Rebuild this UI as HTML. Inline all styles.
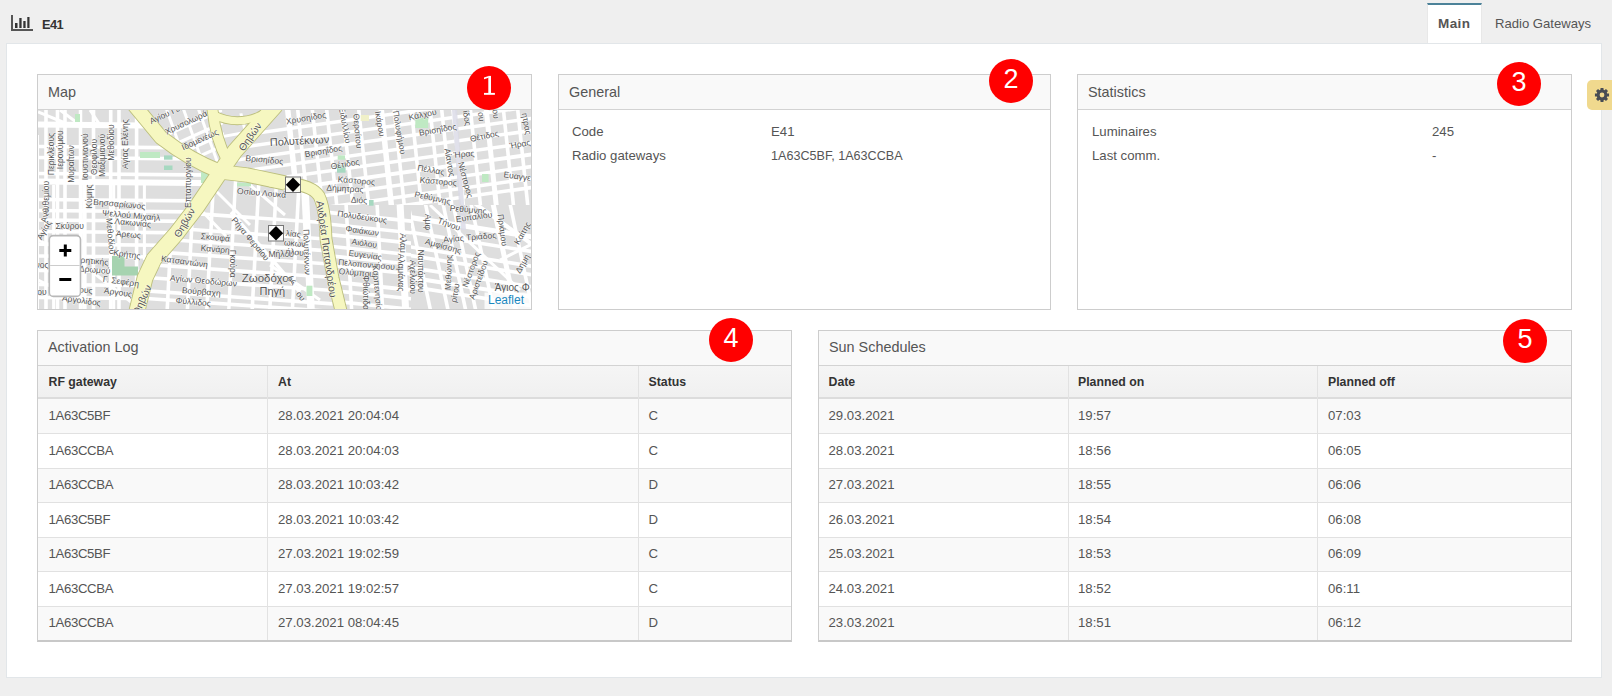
<!DOCTYPE html>
<html><head><meta charset="utf-8">
<style>
*{box-sizing:border-box;margin:0;padding:0}
html,body{width:1612px;height:696px;overflow:hidden}
body{background:#efefef;font-family:"Liberation Sans",sans-serif;color:#555;position:relative}
.abs{position:absolute}
.icon{left:11px;top:15px;width:22px;height:16px}
.e41{left:42px;top:17px;letter-spacing:-0.6px;font-size:12.8px;font-weight:bold;color:#333;line-height:16px}
.tab{left:1427px;top:3px;width:55px;height:41px;background:#fff;border-top:2px solid #4c8299;border-left:1px solid #e8e8e8;border-right:1px solid #e8e8e8}
.tabt{top:15.5px;font-size:13.5px;line-height:16px;color:#555;white-space:nowrap}
.panel{left:6px;top:43px;width:1596px;height:635px;background:#fff;border:1px solid #e2e6e9}
.box{background:#fff;border:1px solid #cdcdcd}
.bh{position:absolute;left:0;top:0;right:0;height:35px;background:#f9f9f9;border-bottom:1px solid #d3d3d3}
.bh span{position:absolute;left:10px;top:9px;font-size:14.4px;line-height:16px;color:#555;white-space:nowrap}
.ttl{font-size:14.4px;line-height:16px;color:#555;white-space:nowrap}
.kv{position:absolute;font-size:13.2px;line-height:16px;color:#555;white-space:nowrap}
.th{font-size:12.3px;font-weight:bold;color:#333;line-height:16px;white-space:nowrap}
.td{font-size:13.2px;color:#555;line-height:16px;white-space:nowrap}
.badge{width:44px;height:44px;border-radius:50%;background:#ff0000;color:#fff;font-size:27px;line-height:41px;text-align:center}
.gear{left:1587px;top:80px;width:30px;height:30px;background:#f0d98e;border-radius:5px}
</style></head>
<body>
<svg class="abs icon" viewBox="0 0 22 16"><rect x="0" y="0" width="2" height="16" fill="#555"/><rect x="0" y="14" width="22" height="2" fill="#555"/><rect x="4" y="8" width="2.5" height="5" fill="#333"/><rect x="8.3" y="3" width="2.3" height="10" fill="#333"/><rect x="12.3" y="6" width="2.3" height="7" fill="#333"/><rect x="16.3" y="2" width="2.2" height="11" fill="#333"/></svg>
<div class="abs e41">E41</div>
<div class="abs tab"></div>
<div class="abs tabt" style="left:1438px;font-weight:bold;letter-spacing:0.4px">Main</div>
<div class="abs tabt" style="left:1495px;font-size:13.1px">Radio Gateways</div>

<div class="abs panel"></div>

<div class="abs box" style="left:37px;top:74px;width:495px;height:236px">
  <div class="bh"><span>Map</span></div>
</div>
<svg class="abs" style="left:38px;top:110px" width="493" height="199" viewBox="38 110 493 199"><defs><clipPath id="rL"><polygon points="0,0 138,0 161,137 190,152 221,171 196,208 176,234 154,259 145,278 137,400 0,400"/></clipPath><clipPath id="rT"><polygon points="138,0 213,0 226,158 221,171 190,152 161,137"/></clipPath><clipPath id="rTri"><polygon points="216,116 272,110 235,151 226,158"/></clipPath><clipPath id="rR1"><polygon points="272,0 600,0 600,205 323,205 320,196 309,185 285,181 247,173 221,171 226,158 235,151"/></clipPath><clipPath id="rR2"><polygon points="323,205 411,205 411,400 342,400 333,278 326,239"/></clipPath><clipPath id="rR3"><polygon points="411,205 600,205 600,400 411,400"/></clipPath><clipPath id="rB"><polygon points="221,171 247,173 285,181 309,185 320,196 323,208 326,239 331,278 338,400 137,400 145,278 154,259 176,234 196,208"/></clipPath></defs><rect x="38" y="110" width="493" height="199" fill="#dedede"/><g clip-path="url(#rL)"><line x1="-310.0" y1="121.5" x2="490.0" y2="128.5" stroke="#fff" stroke-width="6"/><line x1="-310.0" y1="143.5" x2="490.0" y2="150.5" stroke="#fff" stroke-width="3.6"/><line x1="-310.0" y1="154.5" x2="490.0" y2="161.5" stroke="#fff" stroke-width="3.6"/><line x1="-310.0" y1="170.5" x2="490.0" y2="177.5" stroke="#fff" stroke-width="3.6"/><line x1="-310.0" y1="178.5" x2="490.0" y2="185.5" stroke="#fff" stroke-width="6"/><line x1="-310.0" y1="196.5" x2="490.0" y2="203.5" stroke="#fff" stroke-width="3.6"/><line x1="-310.0" y1="207.5" x2="490.0" y2="214.5" stroke="#fff" stroke-width="3.6"/><line x1="-310.0" y1="217.0" x2="490.0" y2="224.0" stroke="#fff" stroke-width="3.6"/><line x1="-310.0" y1="228.5" x2="490.0" y2="235.5" stroke="#fff" stroke-width="3.6"/><line x1="-310.0" y1="241.1" x2="490.0" y2="248.1" stroke="#fff" stroke-width="3.6"/><line x1="-310.0" y1="252.9" x2="490.0" y2="259.9" stroke="#fff" stroke-width="3.6"/><line x1="-310.0" y1="267.5" x2="490.0" y2="274.5" stroke="#fff" stroke-width="3.6"/><line x1="-310.0" y1="281.5" x2="490.0" y2="288.5" stroke="#fff" stroke-width="3.6"/><line x1="-310.0" y1="294.5" x2="490.0" y2="301.5" stroke="#fff" stroke-width="3.6"/><line x1="46.0" y1="-100.0" x2="46.0" y2="500.0" stroke="#fff" stroke-width="3.6"/><line x1="57.5" y1="-100.0" x2="57.5" y2="500.0" stroke="#fff" stroke-width="3.6"/><line x1="65.0" y1="-100.0" x2="65.0" y2="500.0" stroke="#fff" stroke-width="3.6"/><line x1="80.5" y1="-100.0" x2="80.5" y2="500.0" stroke="#fff" stroke-width="3.5"/><line x1="93.5" y1="-100.0" x2="93.5" y2="500.0" stroke="#fff" stroke-width="3.6"/><line x1="110.7" y1="-100.0" x2="110.7" y2="500.0" stroke="#fff" stroke-width="3.6"/><line x1="119.0" y1="-100.0" x2="119.0" y2="500.0" stroke="#fff" stroke-width="3.6"/><line x1="136.6" y1="-100.0" x2="136.6" y2="500.0" stroke="#fff" stroke-width="3.6"/></g><g clip-path="url(#rL)"><line x1="38.0" y1="112.0" x2="70.0" y2="125.0" stroke="#fff" stroke-width="3"/><line x1="60.0" y1="110.0" x2="80.0" y2="125.0" stroke="#fff" stroke-width="3"/><line x1="90.0" y1="110.0" x2="100.0" y2="125.0" stroke="#fff" stroke-width="3"/><line x1="38.0" y1="135.0" x2="38.0" y2="309.0" stroke="#fff" stroke-width="2"/><line x1="53.6" y1="185.0" x2="53.6" y2="309.0" stroke="#fff" stroke-width="3"/><line x1="84.4" y1="182.0" x2="84.4" y2="309.0" stroke="#fff" stroke-width="4.5"/><line x1="113.7" y1="182.0" x2="113.7" y2="309.0" stroke="#fff" stroke-width="3"/><line x1="144.4" y1="182.0" x2="144.4" y2="260.0" stroke="#fff" stroke-width="3"/><line x1="38.0" y1="280.0" x2="80.0" y2="300.0" stroke="#fff" stroke-width="3"/><line x1="90.0" y1="270.0" x2="140.0" y2="309.0" stroke="#fff" stroke-width="3"/><line x1="38.0" y1="240.0" x2="60.0" y2="250.0" stroke="#fff" stroke-width="2.5"/></g><g clip-path="url(#rT)"><line x1="140.0" y1="147.0" x2="240.0" y2="102.0" stroke="#fff" stroke-width="3.2"/><line x1="140.0" y1="160.0" x2="240.0" y2="115.0" stroke="#fff" stroke-width="3.2"/><line x1="140.0" y1="171.7" x2="240.0" y2="126.7" stroke="#fff" stroke-width="3.2"/><line x1="140.0" y1="183.0" x2="240.0" y2="138.0" stroke="#fff" stroke-width="3.2"/><line x1="165.0" y1="105.0" x2="190.0" y2="175.0" stroke="#fff" stroke-width="3"/><line x1="182.0" y1="105.0" x2="207.0" y2="175.0" stroke="#fff" stroke-width="3"/><line x1="197.0" y1="105.0" x2="222.0" y2="175.0" stroke="#fff" stroke-width="3"/></g><g clip-path="url(#rTri)"><line x1="215.0" y1="138.0" x2="275.0" y2="127.0" stroke="#fff" stroke-width="3"/><line x1="240.0" y1="110.0" x2="250.0" y2="150.0" stroke="#fff" stroke-width="3"/></g><g clip-path="url(#rR1)"><line x1="0.0" y1="169.2" x2="800.0" y2="56.8" stroke="#fff" stroke-width="3.5"/><line x1="0.0" y1="181.2" x2="800.0" y2="68.8" stroke="#fff" stroke-width="3.6"/><line x1="0.0" y1="193.2" x2="800.0" y2="80.8" stroke="#fff" stroke-width="3.5"/><line x1="0.0" y1="205.2" x2="800.0" y2="92.8" stroke="#fff" stroke-width="3.6"/><line x1="0.0" y1="217.2" x2="800.0" y2="104.8" stroke="#fff" stroke-width="3.6"/><line x1="0.0" y1="229.2" x2="800.0" y2="116.8" stroke="#fff" stroke-width="4"/><line x1="0.0" y1="241.2" x2="800.0" y2="128.8" stroke="#fff" stroke-width="3.6"/><line x1="0.0" y1="253.2" x2="800.0" y2="140.8" stroke="#fff" stroke-width="3.6"/><line x1="0.0" y1="262.2" x2="800.0" y2="149.8" stroke="#fff" stroke-width="3.6"/><line x1="261.5" y1="-140.0" x2="324.5" y2="460.0" stroke="#fff" stroke-width="5.5"/><line x1="271.5" y1="-140.0" x2="334.5" y2="460.0" stroke="#fff" stroke-width="3.6"/><line x1="286.1" y1="-140.0" x2="349.1" y2="460.0" stroke="#fff" stroke-width="3.6"/><line x1="300.5" y1="-140.0" x2="363.5" y2="460.0" stroke="#fff" stroke-width="3.6"/><line x1="316.5" y1="-140.0" x2="379.5" y2="460.0" stroke="#fff" stroke-width="3.6"/><line x1="332.5" y1="-140.0" x2="395.5" y2="460.0" stroke="#fff" stroke-width="3.6"/><line x1="355.1" y1="-140.0" x2="418.1" y2="460.0" stroke="#fff" stroke-width="5.5"/><line x1="368.0" y1="-140.0" x2="431.0" y2="460.0" stroke="#fff" stroke-width="3.6"/><line x1="385.2" y1="-140.0" x2="448.2" y2="460.0" stroke="#fff" stroke-width="3.6"/><line x1="403.9" y1="-140.0" x2="466.9" y2="460.0" stroke="#fff" stroke-width="3.6"/><line x1="415.5" y1="-140.0" x2="478.5" y2="460.0" stroke="#fff" stroke-width="3.6"/><line x1="426.9" y1="-140.0" x2="489.9" y2="460.0" stroke="#fff" stroke-width="4"/><line x1="444.2" y1="-140.0" x2="507.2" y2="460.0" stroke="#fff" stroke-width="3.6"/><line x1="460.0" y1="-140.0" x2="523.0" y2="460.0" stroke="#fff" stroke-width="5"/><line x1="477.2" y1="-140.0" x2="540.2" y2="460.0" stroke="#fff" stroke-width="3.6"/><line x1="491.5" y1="-140.0" x2="554.5" y2="460.0" stroke="#fff" stroke-width="3.6"/></g><g clip-path="url(#rR2)"><line x1="-30.0" y1="174.8" x2="770.0" y2="258.8" stroke="#fff" stroke-width="3.6"/><line x1="-30.0" y1="186.5" x2="770.0" y2="270.5" stroke="#fff" stroke-width="3.6"/><line x1="-30.0" y1="196.8" x2="770.0" y2="280.8" stroke="#fff" stroke-width="3.6"/><line x1="-30.0" y1="208.5" x2="770.0" y2="292.5" stroke="#fff" stroke-width="3.6"/><line x1="-30.0" y1="218.0" x2="770.0" y2="302.0" stroke="#fff" stroke-width="3.6"/><line x1="-30.0" y1="227.6" x2="770.0" y2="311.6" stroke="#fff" stroke-width="3.6"/><line x1="-30.0" y1="243.7" x2="770.0" y2="327.7" stroke="#fff" stroke-width="4"/><line x1="-30.0" y1="252.5" x2="770.0" y2="336.5" stroke="#fff" stroke-width="3.6"/><line x1="-30.0" y1="263.0" x2="770.0" y2="347.0" stroke="#fff" stroke-width="3.6"/><line x1="292.3" y1="-40.0" x2="323.7" y2="560.0" stroke="#fff" stroke-width="8"/><line x1="333.3" y1="-40.0" x2="364.7" y2="560.0" stroke="#fff" stroke-width="3.6"/><line x1="364.3" y1="-40.0" x2="395.7" y2="560.0" stroke="#fff" stroke-width="3.6"/><line x1="387.3" y1="-40.0" x2="418.7" y2="560.0" stroke="#fff" stroke-width="7"/></g><g clip-path="url(#rR3)"><line x1="70.0" y1="163.6" x2="870.0" y2="290.4" stroke="#fff" stroke-width="5"/><line x1="70.0" y1="178.3" x2="870.0" y2="305.1" stroke="#fff" stroke-width="3.6"/><line x1="70.0" y1="193.0" x2="870.0" y2="319.8" stroke="#fff" stroke-width="3.6"/><line x1="70.0" y1="201.6" x2="870.0" y2="328.4" stroke="#fff" stroke-width="3.6"/><line x1="70.0" y1="213.6" x2="870.0" y2="340.4" stroke="#fff" stroke-width="3.6"/><line x1="70.0" y1="223.6" x2="870.0" y2="350.4" stroke="#fff" stroke-width="4"/><line x1="70.0" y1="232.6" x2="870.0" y2="359.4" stroke="#fff" stroke-width="3.6"/><line x1="356.0" y1="-40.0" x2="483.6" y2="560.0" stroke="#fff" stroke-width="3.6"/><line x1="373.6" y1="-40.0" x2="501.2" y2="560.0" stroke="#fff" stroke-width="3.6"/><line x1="391.2" y1="-40.0" x2="518.8" y2="560.0" stroke="#fff" stroke-width="3.6"/><line x1="401.2" y1="-40.0" x2="528.8" y2="560.0" stroke="#fff" stroke-width="3.6"/><line x1="419.2" y1="-40.0" x2="546.8" y2="560.0" stroke="#fff" stroke-width="3.6"/><line x1="441.2" y1="-40.0" x2="568.8" y2="560.0" stroke="#fff" stroke-width="5"/><line x1="458.2" y1="-40.0" x2="585.8" y2="560.0" stroke="#fff" stroke-width="3.6"/></g><g clip-path="url(#rR3)"><line x1="470.0" y1="200.0" x2="540.0" y2="250.0" stroke="#fff" stroke-width="4"/><line x1="430.0" y1="205.0" x2="520.0" y2="290.0" stroke="#fff" stroke-width="3"/><line x1="500.0" y1="260.0" x2="540.0" y2="240.0" stroke="#fff" stroke-width="3"/></g><g clip-path="url(#rB)"><line x1="-160.0" y1="188.8" x2="640.0" y2="244.8" stroke="#fff" stroke-width="3.6"/><line x1="-160.0" y1="205.0" x2="640.0" y2="261.0" stroke="#fff" stroke-width="3.5"/><line x1="-160.0" y1="216.6" x2="640.0" y2="272.6" stroke="#fff" stroke-width="3.6"/><line x1="-160.0" y1="229.8" x2="640.0" y2="285.8" stroke="#fff" stroke-width="3.6"/><line x1="-160.0" y1="243.0" x2="640.0" y2="299.0" stroke="#fff" stroke-width="3.6"/><line x1="-160.0" y1="256.0" x2="640.0" y2="312.0" stroke="#fff" stroke-width="3.6"/><line x1="-160.0" y1="269.4" x2="640.0" y2="325.4" stroke="#fff" stroke-width="3.6"/><line x1="-160.0" y1="277.0" x2="640.0" y2="333.0" stroke="#fff" stroke-width="3.6"/><line x1="185.5" y1="-40.0" x2="154.1" y2="560.0" stroke="#fff" stroke-width="3.6"/><line x1="205.7" y1="-40.0" x2="174.3" y2="560.0" stroke="#fff" stroke-width="3.6"/><line x1="225.1" y1="-40.0" x2="193.7" y2="560.0" stroke="#fff" stroke-width="3.6"/><line x1="247.1" y1="-40.0" x2="215.7" y2="560.0" stroke="#fff" stroke-width="3.5"/><line x1="270.5" y1="-40.0" x2="239.1" y2="560.0" stroke="#fff" stroke-width="3.6"/><line x1="288.1" y1="-40.0" x2="256.7" y2="560.0" stroke="#fff" stroke-width="3.6"/><line x1="310.7" y1="-40.0" x2="279.3" y2="560.0" stroke="#fff" stroke-width="3.6"/></g><g clip-path="url(#rB)"><line x1="305.0" y1="190.0" x2="311.0" y2="309.0" stroke="#fff" stroke-width="7.5"/><line x1="231.0" y1="212.0" x2="300.0" y2="292.0" stroke="#fff" stroke-width="3.5"/><line x1="197.0" y1="206.0" x2="226.0" y2="236.0" stroke="#fff" stroke-width="3"/><line x1="215.0" y1="190.0" x2="250.0" y2="225.0" stroke="#fff" stroke-width="3"/><line x1="250.0" y1="185.0" x2="285.0" y2="215.0" stroke="#fff" stroke-width="3"/><line x1="270.0" y1="265.0" x2="320.0" y2="300.0" stroke="#fff" stroke-width="3"/></g><rect x="140" y="152" width="20" height="6" fill="#bfe9c3"/><rect x="112" y="256" width="12.5" height="11" fill="#a6d3b0"/><rect x="112" y="266.5" width="26" height="9" fill="#a6d3b0"/><rect x="75" y="114" width="5" height="8" fill="#bfe9c3"/><rect x="164" y="155.4" width="8.5" height="4.3" fill="#a6d8c0"/><rect x="164" y="165.5" width="8.5" height="4.5" fill="#a6d8c0"/><rect x="201" y="172" width="10" height="11" fill="#bfe9c3"/><rect x="237" y="182.7" width="14" height="3.6" fill="#bfe9c3"/><rect x="337.7" y="155.4" width="7.3" height="4.3" fill="#bfe9c3"/><rect x="337" y="165.5" width="8.6" height="7.2" fill="#a6d8c0"/><rect x="360.7" y="115" width="8.3" height="6" fill="#f0f0c8"/><rect x="369" y="200" width="4.6" height="5.7" fill="#a6d8c0"/><rect x="415.3" y="118" width="12.9" height="10" fill="#bfe9c3"/><rect x="482" y="174" width="6.6" height="8" fill="#bfe9c3"/><rect x="306.5" y="285.7" width="5.9" height="10.3" fill="#bfe9c3"/><polygon points="452,110 457,110 466,230 461,230" fill="#d9d9e6" opacity="0.8"/><path d="M 130 100 L 161 137.5 Q 190 160 221 172 L 247 175 L 285 183" fill="none" stroke="#bcbf7c" stroke-width="15.3" stroke-linejoin="round"/><path d="M 270 181 L 285 183 Q 312 185 319 196 Q 325 208 326 239 L 333 278 L 342 315" fill="none" stroke="#bcbf7c" stroke-width="12.8" stroke-linejoin="round"/><path d="M 276 105 L 235 151 L 221 171 L 196 208 L 176 234 L 154 259 L 145 278 L 136 315" fill="none" stroke="#bcbf7c" stroke-width="16.8" stroke-linejoin="round"/><path d="M 212 105 Q 215 138 227 160" fill="none" stroke="#bcbf7c" stroke-width="11.8" stroke-linejoin="round"/><path d="M 214 115 Q 236 126 259 116 L 282 104" fill="none" stroke="#bcbf7c" stroke-width="8.8" stroke-linejoin="round"/><path d="M 130 100 L 161 137.5 Q 190 160 221 172 L 247 175 L 285 183" fill="none" stroke="#f6f7c0" stroke-width="13.5" stroke-linejoin="round"/><path d="M 270 181 L 285 183 Q 312 185 319 196 Q 325 208 326 239 L 333 278 L 342 315" fill="none" stroke="#f6f7c0" stroke-width="11" stroke-linejoin="round"/><path d="M 276 105 L 235 151 L 221 171 L 196 208 L 176 234 L 154 259 L 145 278 L 136 315" fill="none" stroke="#f6f7c0" stroke-width="15" stroke-linejoin="round"/><path d="M 212 105 Q 215 138 227 160" fill="none" stroke="#f6f7c0" stroke-width="10" stroke-linejoin="round"/><path d="M 214 115 Q 236 126 259 116 L 282 104" fill="none" stroke="#f6f7c0" stroke-width="7" stroke-linejoin="round"/><g font-family="Liberation Sans" fill="#555" text-anchor="middle" dominant-baseline="central" stroke="#fff" stroke-width="1.2" stroke-opacity="0.55" paint-order="stroke"><text x="51.1" y="154" font-size="8.5" transform="rotate(-90 51.1 154)">Περικλέους</text><text x="60.4" y="149.7" font-size="8.5" transform="rotate(-90 60.4 149.7)">Ιερονύμου</text><text x="71.2" y="164" font-size="8.5" transform="rotate(-90 71.2 164)">Μυραΐτων</text><text x="84.9" y="156.9" font-size="8.5" transform="rotate(-90 84.9 156.9)">Ιουστινιανού</text><text x="94.2" y="156.9" font-size="8.5" transform="rotate(-90 94.2 156.9)">Θεοφίλου</text><text x="102" y="155.4" font-size="8.5" transform="rotate(-90 102 155.4)">Μαξιμιανού</text><text x="110.7" y="142.5" font-size="8.5" transform="rotate(-90 110.7 142.5)">Μεθοδίου</text><text x="125" y="144" font-size="8.5" transform="rotate(-90 125 144)">Αγίας Ελένης</text><text x="89" y="196.4" font-size="8.5" transform="rotate(-90 89 196.4)">Κύμης</text><text x="119.3" y="204" font-size="8.5" transform="rotate(5 119.3 204)">Βησσαρίωνος</text><text x="46" y="198" font-size="8.5" transform="rotate(-90 46 198)">Ανθεμίου</text><text x="169.6" y="112.3" font-size="8.5" transform="rotate(-25 169.6 112.3)">Αγίου Γεωρ</text><text x="186" y="122.4" font-size="8.5" transform="rotate(-25 186 122.4)">Χρυσολωρά</text><text x="199.8" y="139.6" font-size="8.5" transform="rotate(-25 199.8 139.6)">Ιδομενέως</text><text x="250" y="136.7" font-size="10" transform="rotate(-55 250 136.7)">Θηβών</text><text x="188.3" y="182.7" font-size="8.5" transform="rotate(-90 188.3 182.7)">Επταπυργίου</text><text x="306" y="118" font-size="8.5" transform="rotate(-10 306 118)">Χρυσηίδος</text><text x="299.5" y="140.5" font-size="11" transform="rotate(-3 299.5 140.5)">Πολυτέκνων</text><text x="264.4" y="159.7" font-size="8.5" transform="rotate(5 264.4 159.7)">Βρισηίδος</text><text x="261.6" y="192.8" font-size="8.5" transform="rotate(5 261.6 192.8)">Οσίου Λουκά</text><text x="323.4" y="151" font-size="8.5" transform="rotate(-10 323.4 151)">Βρισηΐδος</text><text x="345" y="164" font-size="8.5" transform="rotate(-10 345 164)">Θέτιδος</text><text x="356.4" y="180.6" font-size="8.5" transform="rotate(5 356.4 180.6)">Κάστορος</text><text x="345" y="188.5" font-size="8.5" transform="rotate(3 345 188.5)">Δήμητρας</text><text x="359" y="200" font-size="8.5" transform="rotate(3 359 200)">Διός</text><text x="345" y="125" font-size="8.5" transform="rotate(80 345 125)">Ειδυλλίου</text><text x="357.8" y="131" font-size="8.5" transform="rotate(85 357.8 131)">Θερσίτου</text><text x="380" y="123.8" font-size="8.5" transform="rotate(80 380 123.8)">Ικάρου</text><text x="399.5" y="132.4" font-size="8.5" transform="rotate(80 399.5 132.4)">Πολυφήμου</text><text x="422.5" y="114.5" font-size="8.5" transform="rotate(-12 422.5 114.5)">Κάλχου</text><text x="437.6" y="129.6" font-size="8.5" transform="rotate(-10 437.6 129.6)">Βρισηΐδος</text><text x="484.3" y="136" font-size="8.5" transform="rotate(-12 484.3 136)">Θέτιδος</text><text x="520" y="144" font-size="8.5" transform="rotate(-10 520 144)">Ήρας</text><text x="464" y="154" font-size="8.5" transform="rotate(-5 464 154)">Ήρας</text><text x="449.8" y="162.6" font-size="8.5" transform="rotate(80 449.8 162.6)">Αίαντος</text><text x="465.6" y="179.8" font-size="8.5" transform="rotate(75 465.6 179.8)">Νέστορος</text><text x="431" y="169.8" font-size="8.5" transform="rotate(10 431 169.8)">Πέλλας</text><text x="438.3" y="181.3" font-size="8.5" transform="rotate(5 438.3 181.3)">Κάστορος</text><text x="432.6" y="197.8" font-size="8.5" transform="rotate(12 432.6 197.8)">Ρεθύμνης</text><text x="517.3" y="176.2" font-size="8.5" transform="rotate(8 517.3 176.2)">Ευαγγε</text><text x="467" y="118" font-size="8.5" transform="rotate(80 467 118)">ίδος</text><text x="481.4" y="116.6" font-size="8.5" transform="rotate(85 481.4 116.6)">ου</text><text x="496" y="114" font-size="8.5" transform="rotate(85 496 114)">ου</text><text x="526.7" y="123.8" font-size="8.5" transform="rotate(80 526.7 123.8)">ητρας</text><text x="44.8" y="215.3" font-size="8.5" transform="rotate(-80 44.8 215.3)">Ανθ</text><text x="131.3" y="215.3" font-size="8.5" transform="rotate(5 131.3 215.3)">Ψελλού Μιχαήλ</text><text x="110.8" y="236" font-size="8.5" transform="rotate(85 110.8 236)">Μεθοδίου</text><text x="132.8" y="222.7" font-size="8.5" transform="rotate(5 132.8 222.7)">Λακωνίας</text><text x="69.7" y="226.3" font-size="8.5" transform="rotate(0 69.7 226.3)">Σκύρου</text><text x="128.4" y="234.4" font-size="8.5" transform="rotate(5 128.4 234.4)">Άρεως</text><text x="126.9" y="254.2" font-size="8.5" transform="rotate(8 126.9 254.2)">Κρήτης</text><text x="91.7" y="260.8" font-size="8.5" transform="rotate(5 91.7 260.8)">Κρητικής</text><text x="94.7" y="269.6" font-size="8.5" transform="rotate(5 94.7 269.6)">Δρωμού</text><text x="121" y="281.3" font-size="8.5" transform="rotate(8 121 281.3)">Γ. Σεφέρη</text><text x="118" y="292.3" font-size="8.5" transform="rotate(8 118 292.3)">Άργους</text><text x="81.5" y="300.4" font-size="8.5" transform="rotate(8 81.5 300.4)">Αργολίδος</text><text x="85.9" y="290" font-size="8.5" transform="rotate(5 85.9 290)">ους</text><text x="42" y="265" font-size="8.5" transform="rotate(0 42 265)">νος</text><text x="42" y="292" font-size="8.5" transform="rotate(0 42 292)">ου</text><text x="44" y="230" font-size="8.5" transform="rotate(-60 44 230)">Αγίας</text><text x="184.5" y="222.7" font-size="10" transform="rotate(-60 184.5 222.7)">Θηβών</text><text x="215.3" y="237.3" font-size="8.5" transform="rotate(5 215.3 237.3)">Σκουφά</text><text x="215.3" y="249" font-size="8.5" transform="rotate(5 215.3 249)">Κανάρη</text><text x="250.4" y="238.8" font-size="8.5" transform="rotate(50 250.4 238.8)">Ρήγα Φεραίου</text><text x="184.5" y="261.5" font-size="8.5" transform="rotate(8 184.5 261.5)">Κατσαντώνη</text><text x="232.8" y="263.7" font-size="8.5" transform="rotate(90 232.8 263.7)">Γκούρα</text><text x="203.5" y="280.6" font-size="8.5" transform="rotate(5 203.5 280.6)">Αγίων Θεοδώρων</text><text x="201.3" y="291.6" font-size="8.5" transform="rotate(5 201.3 291.6)">Βούρβαχη</text><text x="193.3" y="301.8" font-size="8.5" transform="rotate(5 193.3 301.8)">Φύλλιδος</text><text x="268" y="278.4" font-size="11.5" transform="rotate(0 268 278.4)">Ζωοδόχος</text><text x="272.4" y="291" font-size="11" transform="rotate(0 272.4 291)">Πηγή</text><text x="281.2" y="253.5" font-size="8.5" transform="rotate(0 281.2 253.5)">Μήλου</text><text x="142" y="300" font-size="10" transform="rotate(-65 142 300)">Θηβών</text><text x="327" y="249" font-size="10.5" transform="rotate(82 327 249)">Ανδρέα Παπανδρέου</text><text x="307" y="252" font-size="8.5" transform="rotate(88 307 252)">Πολυτέκνων</text><text x="362.2" y="216.8" font-size="8.5" transform="rotate(8 362.2 216.8)">Πολυδεύκους</text><text x="362.2" y="230.7" font-size="8.5" transform="rotate(8 362.2 230.7)">Φαιάκων</text><text x="364.4" y="243.2" font-size="8.5" transform="rotate(8 364.4 243.2)">Αιόλου</text><text x="365.2" y="255" font-size="8.5" transform="rotate(8 365.2 255)">Ευγενίας</text><text x="366.6" y="264.5" font-size="8.5" transform="rotate(5 366.6 264.5)">Πελοποννήσου</text><text x="356.4" y="272.5" font-size="8.5" transform="rotate(5 356.4 272.5)">Ολύμπου</text><text x="365.9" y="294.5" font-size="8.5" transform="rotate(90 365.9 294.5)">Φθιώτιδος</text><text x="377.6" y="290" font-size="8.5" transform="rotate(85 377.6 290)">Καρπενησίου</text><text x="401.1" y="272.5" font-size="8.5" transform="rotate(90 401.1 272.5)">Αλαμάνας</text><text x="293.3" y="233.7" font-size="8.5" transform="rotate(5 293.3 233.7)">λίας</text><text x="294.8" y="243.2" font-size="8.5" transform="rotate(5 294.8 243.2)">ωκων</text><text x="294.8" y="252" font-size="8.5" transform="rotate(5 294.8 252)">ήλου</text><text x="291.9" y="279.8" font-size="8.5" transform="rotate(40 291.9 279.8)">ος</text><text x="300.7" y="296" font-size="8.5" transform="rotate(50 300.7 296)">ου</text><text x="468.2" y="209.5" font-size="8.5" transform="rotate(5 468.2 209.5)">Ρεθύμνης</text><text x="474" y="216.8" font-size="8.5" transform="rotate(-8 474 216.8)">Ευπαλίου</text><text x="449" y="224" font-size="8.5" transform="rotate(20 449 224)">Τήνου</text><text x="469.7" y="237.3" font-size="8.5" transform="rotate(-5 469.7 237.3)">Αγίας Τριάδος</text><text x="443.3" y="246" font-size="8.5" transform="rotate(15 443.3 246)">Αμφίσσης</text><text x="502.6" y="230" font-size="8.5" transform="rotate(82 502.6 230)">Πριάμου</text><text x="522.4" y="233" font-size="8.5" transform="rotate(-60 522.4 233)">Καίτης</text><text x="420.5" y="271" font-size="8.5" transform="rotate(90 420.5 271)">Ναυπάκτου</text><text x="448.4" y="272.5" font-size="8.5" transform="rotate(-88 448.4 272.5)">Μεθώνης</text><text x="471" y="269.6" font-size="8.5" transform="rotate(-70 471 269.6)">Νέστορος</text><text x="478.4" y="279.8" font-size="8.5" transform="rotate(-70 478.4 279.8)">Αριστείδου</text><text x="522.4" y="263.7" font-size="8.5" transform="rotate(-60 522.4 263.7)">Δημη</text><text x="512.2" y="287.2" font-size="10" transform="rotate(0 512.2 287.2)">Άγιος Φ</text><text x="455" y="293" font-size="8.5" transform="rotate(-80 455 293)">ρίτου</text><text x="412.5" y="277" font-size="8.5" transform="rotate(90 412.5 277)">Αχελώου</text><text x="403" y="243" font-size="8.5" transform="rotate(90 403 243)">Αλαμ</text><text x="428" y="222" font-size="8.5" transform="rotate(90 428 222)">Αμφ</text></g><rect x="285.5" y="177" width="15" height="15.5" fill="#fff" fill-opacity="0.8" stroke="#777" stroke-width="1"/><polygon points="293.0,177.55 300.2,184.75 293.0,191.95 285.8,184.75" fill="#000"/><rect x="268.5" y="225.5" width="15" height="15.5" fill="#fff" fill-opacity="0.8" stroke="#777" stroke-width="1"/><polygon points="276.0,226.05 283.2,233.25 276.0,240.45 268.8,233.25" fill="#000"/><rect x="49.3" y="235.6" width="31.2" height="60.8" rx="4" fill="#fff" stroke="#b8b8b8" stroke-width="1.6"/><line x1="50.1" y1="265.5" x2="79.7" y2="265.5" stroke="#ccc" stroke-width="1"/><rect x="59.3" y="249" width="12" height="3" fill="#000"/><rect x="63.8" y="244.5" width="3" height="12" fill="#000"/><rect x="59.3" y="278" width="12" height="3" fill="#000"/><rect x="484.5" y="292.5" width="47" height="17" fill="#fff" fill-opacity="0.8"/><text x="488" y="303.5" font-family="Liberation Sans" font-size="12" fill="#1a88c0">Leaflet</text></svg>

<div class="abs box" style="left:558px;top:74px;width:493px;height:236px">
  <div class="bh"><span>General</span></div>
  <div class="kv" style="left:13px;top:49px">Code</div>
  <div class="kv" style="left:212px;top:49px">E41</div>
  <div class="kv" style="left:13px;top:73px">Radio gateways</div>
  <div class="kv" style="left:212px;top:73px;font-size:12.6px">1A63C5BF, 1A63CCBA</div>
</div>

<div class="abs box" style="left:1077px;top:74px;width:495px;height:236px">
  <div class="bh"><span>Statistics</span></div>
  <div class="kv" style="left:14px;top:49px">Luminaires</div>
  <div class="kv" style="left:354px;top:49px">245</div>
  <div class="kv" style="left:14px;top:73px">Last comm.</div>
  <div class="kv" style="left:354px;top:73px">-</div>
</div>

<div class="abs box" style="left:37px;top:330px;width:755px;height:312px;border-bottom:2px solid #c8c8c8"></div>
<div class="abs" style="left:38px;top:331px;width:753px;height:34px;background:#f9f9f9"></div>
<div class="abs" style="left:38px;top:365px;width:753px;height:1px;background:#d3d3d3"></div>
<div class="abs ttl" style="left:48px;top:339px">Activation Log</div>
<div class="abs" style="left:38px;top:366px;width:753px;height:31px;background:linear-gradient(#f5f5f5,#f0f0f0)"></div>
<div class="abs" style="left:38px;top:397px;width:753px;height:2px;background:#dcdcdc"></div>
<div class="abs" style="left:38px;top:399px;width:753px;height:34px;background:#f9f9f9"></div>
<div class="abs" style="left:38px;top:469px;width:753px;height:33px;background:#f9f9f9"></div>
<div class="abs" style="left:38px;top:538px;width:753px;height:33px;background:#f9f9f9"></div>
<div class="abs" style="left:38px;top:607px;width:753px;height:33px;background:#f9f9f9"></div>
<div class="abs" style="left:38px;top:433px;width:753px;height:1px;background:#e1e1e1"></div>
<div class="abs" style="left:38px;top:468px;width:753px;height:1px;background:#e1e1e1"></div>
<div class="abs" style="left:38px;top:502px;width:753px;height:1px;background:#e1e1e1"></div>
<div class="abs" style="left:38px;top:537px;width:753px;height:1px;background:#e1e1e1"></div>
<div class="abs" style="left:38px;top:571px;width:753px;height:1px;background:#e1e1e1"></div>
<div class="abs" style="left:38px;top:606px;width:753px;height:1px;background:#e1e1e1"></div>
<div class="abs" style="left:267px;top:366px;width:1px;height:274px;background:#e2e2e2"></div>
<div class="abs" style="left:638px;top:366px;width:1px;height:274px;background:#e2e2e2"></div>
<div class="abs th" style="left:48.5px;top:374px">RF gateway</div>
<div class="abs th" style="left:278px;top:374px">At</div>
<div class="abs th" style="left:648.5px;top:374px">Status</div>
<div class="abs td" style="left:48.5px;top:407.8px;letter-spacing:-0.35px">1A63C5BF</div>
<div class="abs td" style="left:278px;top:407.8px">28.03.2021 20:04:04</div>
<div class="abs td" style="left:648.5px;top:407.8px">C</div>
<div class="abs td" style="left:48.5px;top:442.8px;letter-spacing:-0.35px">1A63CCBA</div>
<div class="abs td" style="left:278px;top:442.8px">28.03.2021 20:04:03</div>
<div class="abs td" style="left:648.5px;top:442.8px">C</div>
<div class="abs td" style="left:48.5px;top:477.3px;letter-spacing:-0.35px">1A63CCBA</div>
<div class="abs td" style="left:278px;top:477.3px">28.03.2021 10:03:42</div>
<div class="abs td" style="left:648.5px;top:477.3px">D</div>
<div class="abs td" style="left:48.5px;top:511.8px;letter-spacing:-0.35px">1A63C5BF</div>
<div class="abs td" style="left:278px;top:511.8px">28.03.2021 10:03:42</div>
<div class="abs td" style="left:648.5px;top:511.8px">D</div>
<div class="abs td" style="left:48.5px;top:546.3px;letter-spacing:-0.35px">1A63C5BF</div>
<div class="abs td" style="left:278px;top:546.3px">27.03.2021 19:02:59</div>
<div class="abs td" style="left:648.5px;top:546.3px">C</div>
<div class="abs td" style="left:48.5px;top:580.8px;letter-spacing:-0.35px">1A63CCBA</div>
<div class="abs td" style="left:278px;top:580.8px">27.03.2021 19:02:57</div>
<div class="abs td" style="left:648.5px;top:580.8px">C</div>
<div class="abs td" style="left:48.5px;top:615.3px;letter-spacing:-0.35px">1A63CCBA</div>
<div class="abs td" style="left:278px;top:615.3px">27.03.2021 08:04:45</div>
<div class="abs td" style="left:648.5px;top:615.3px">D</div>
<div class="abs box" style="left:818px;top:330px;width:754px;height:312px;border-bottom:2px solid #c8c8c8"></div>
<div class="abs" style="left:819px;top:331px;width:752px;height:34px;background:#f9f9f9"></div>
<div class="abs" style="left:819px;top:365px;width:752px;height:1px;background:#d3d3d3"></div>
<div class="abs ttl" style="left:829px;top:339px">Sun Schedules</div>
<div class="abs" style="left:819px;top:366px;width:752px;height:31px;background:linear-gradient(#f5f5f5,#f0f0f0)"></div>
<div class="abs" style="left:819px;top:397px;width:752px;height:2px;background:#dcdcdc"></div>
<div class="abs" style="left:819px;top:399px;width:752px;height:34px;background:#f9f9f9"></div>
<div class="abs" style="left:819px;top:469px;width:752px;height:33px;background:#f9f9f9"></div>
<div class="abs" style="left:819px;top:538px;width:752px;height:33px;background:#f9f9f9"></div>
<div class="abs" style="left:819px;top:607px;width:752px;height:33px;background:#f9f9f9"></div>
<div class="abs" style="left:819px;top:433px;width:752px;height:1px;background:#e1e1e1"></div>
<div class="abs" style="left:819px;top:468px;width:752px;height:1px;background:#e1e1e1"></div>
<div class="abs" style="left:819px;top:502px;width:752px;height:1px;background:#e1e1e1"></div>
<div class="abs" style="left:819px;top:537px;width:752px;height:1px;background:#e1e1e1"></div>
<div class="abs" style="left:819px;top:571px;width:752px;height:1px;background:#e1e1e1"></div>
<div class="abs" style="left:819px;top:606px;width:752px;height:1px;background:#e1e1e1"></div>
<div class="abs" style="left:1068px;top:366px;width:1px;height:274px;background:#e2e2e2"></div>
<div class="abs" style="left:1317px;top:366px;width:1px;height:274px;background:#e2e2e2"></div>
<div class="abs th" style="left:828.5px;top:374px">Date</div>
<div class="abs th" style="left:1078px;top:374px">Planned on</div>
<div class="abs th" style="left:1328px;top:374px">Planned off</div>
<div class="abs td" style="left:828.5px;top:407.8px">29.03.2021</div>
<div class="abs td" style="left:1078px;top:407.8px">19:57</div>
<div class="abs td" style="left:1328px;top:407.8px">07:03</div>
<div class="abs td" style="left:828.5px;top:442.8px">28.03.2021</div>
<div class="abs td" style="left:1078px;top:442.8px">18:56</div>
<div class="abs td" style="left:1328px;top:442.8px">06:05</div>
<div class="abs td" style="left:828.5px;top:477.3px">27.03.2021</div>
<div class="abs td" style="left:1078px;top:477.3px">18:55</div>
<div class="abs td" style="left:1328px;top:477.3px">06:06</div>
<div class="abs td" style="left:828.5px;top:511.8px">26.03.2021</div>
<div class="abs td" style="left:1078px;top:511.8px">18:54</div>
<div class="abs td" style="left:1328px;top:511.8px">06:08</div>
<div class="abs td" style="left:828.5px;top:546.3px">25.03.2021</div>
<div class="abs td" style="left:1078px;top:546.3px">18:53</div>
<div class="abs td" style="left:1328px;top:546.3px">06:09</div>
<div class="abs td" style="left:828.5px;top:580.8px">24.03.2021</div>
<div class="abs td" style="left:1078px;top:580.8px">18:52</div>
<div class="abs td" style="left:1328px;top:580.8px">06:11</div>
<div class="abs td" style="left:828.5px;top:615.3px">23.03.2021</div>
<div class="abs td" style="left:1078px;top:615.3px">18:51</div>
<div class="abs td" style="left:1328px;top:615.3px">06:12</div>

<div class="abs badge" style="left:467px;top:66px"></div><svg class="abs" style="left:476px;top:72px" width="26" height="26" viewBox="476 72 26 26"><rect x="488.3" y="75.9" width="2.7" height="17.5" fill="#fff"/><rect x="484" y="92.9" width="10.9" height="1.9" fill="#fff"/><polygon points="484,77.4 488.6,75.9 488.6,77.7 484,79.2" fill="#fff"/></svg>
<div class="abs badge" style="left:989px;top:59px">2</div>
<div class="abs badge" style="left:1497px;top:62px">3</div>
<div class="abs badge" style="left:709px;top:318px">4</div>
<div class="abs badge" style="left:1503px;top:319px">5</div>

<svg class="abs" style="left:1587px;top:80px" width="25" height="30" viewBox="0 0 25 30"><rect x="0" y="0" width="35" height="30" rx="5" fill="#f0d98e"/><path fill-rule="evenodd" d="M 20.16 13.40 L 22.06 13.57 L 22.06 16.43 L 20.16 16.60 L 19.78 17.52 L 21.00 18.98 L 18.98 21.00 L 17.52 19.78 L 16.60 20.16 L 16.43 22.06 L 13.57 22.06 L 13.40 20.16 L 12.48 19.78 L 11.02 21.00 L 9.00 18.98 L 10.22 17.52 L 9.84 16.60 L 7.94 16.43 L 7.94 13.57 L 9.84 13.40 L 10.22 12.48 L 9.00 11.02 L 11.02 9.00 L 12.48 10.22 L 13.40 9.84 L 13.57 7.94 L 16.43 7.94 L 16.60 9.84 L 17.52 10.22 L 18.98 9.00 L 21.00 11.02 L 19.78 12.48 Z M 17.4 15 A 2.4 2.4 0 1 0 12.6 15 A 2.4 2.4 0 1 0 17.4 15 Z" fill="#474c53"/></svg>
</body></html>
